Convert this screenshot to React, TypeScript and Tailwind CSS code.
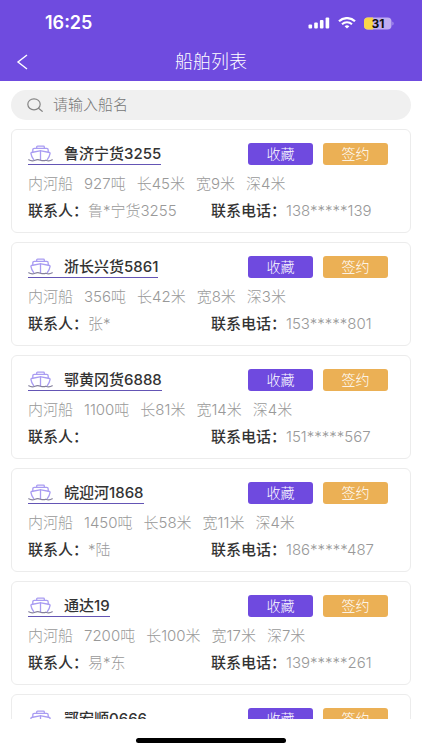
type Ship = {
  name: string;
  specs: string[];
  contact: string;
  phone: string;
};

const ships: Ship[] = [
  { name: "鲁济宁货3255", specs: ["内河船", "927吨", "长45米", "宽9米", "深4米"], contact: "鲁*宁货3255", phone: "138*****139" },
  { name: "浙长兴货5861", specs: ["内河船", "356吨", "长42米", "宽8米", "深3米"], contact: "张*", phone: "153*****801" },
  { name: "鄂黄冈货6888", specs: ["内河船", "1100吨", "长81米", "宽14米", "深4米"], contact: "", phone: "151*****567" },
  { name: "皖迎河1868", specs: ["内河船", "1450吨", "长58米", "宽11米", "深4米"], contact: "*陆", phone: "186*****487" },
  { name: "通达19", specs: ["内河船", "7200吨", "长100米", "宽17米", "深7米"], contact: "易*东", phone: "139*****261" },
  { name: "鄂宏顺0666", specs: [], contact: "", phone: "" },
];

function ShipIcon() {
  return (
    <svg width="25" height="20" viewBox="0 0 25 20" fill="none" aria-hidden="true">
      <g stroke="#a99cf2" strokeWidth="1.300" strokeLinejoin="round" strokeLinecap="round">
        <path d="M8.700 4.200V3q0-.8.800-.8h6q.8 0 .8.800v1.200" />
        <path d="M4.800 8.300V6q0-1.600 1.600-1.600h12.200q1.600 0 1.600 1.600v2.300" />
        <path d="M5.700 15.700C4.300 13.800 3.300 11.700 2.900 9.300q-.1-.6.500-.8l8.500-1.700q.6-.1 1.200 0l8.500 1.700q.6.200.5.800c-.4 2.400-1.400 4.500-2.800 6.400" />
        <path d="M12.500 7v8.800" />
      </g>
      <path
        d="M.7 15.800c2.200 1.300 4.500 1.300 6.400.4 1.700-.7 3.300-.7 5.400 0s3.700.7 5.400 0c1.900.9 4.200.9 6.400-.4"
        stroke="#85809c"
        strokeWidth="1.200"
        strokeLinecap="round"
      />
    </svg>
  );
}

function StatusBar() {
  return (
    <div className="flex h-[46px] items-center justify-between pl-[45px] pr-7">
      <span className="text-lg font-semibold leading-5">16:25</span>
      <div className="flex items-center gap-2">
        <svg width="22" height="12" viewBox="0 0 22 12" fill="#fff" aria-hidden="true">
          <rect x="0.500" y="7.500" width="3.600" height="4" rx="1" />
          <rect x="6.200" y="5.500" width="3.600" height="6" rx="1" />
          <rect x="11.900" y="3" width="3.600" height="8.500" rx="1" />
          <rect x="17.600" y="0.500" width="3.600" height="11" rx="1" />
        </svg>
        <svg width="18" height="12" viewBox="0 0 18 12" fill="none" aria-hidden="true">
          <path d="M1 4.300a11.500 11.500 0 0 1 16 0" stroke="#fff" strokeWidth="2.200" />
          <path d="M4 7.300a7.200 7.200 0 0 1 10 0" stroke="#fff" strokeWidth="2" />
          <path d="M9 11.600 6.600 9.300a3.500 3.500 0 0 1 4.800 0Z" fill="#fff" />
        </svg>
        <svg width="30" height="13" viewBox="0 0 30 13" aria-hidden="true">
          <path d="M4 .5h19.500a4 4 0 0 1 4 4v4a4 4 0 0 1-4 4H4a4 4 0 0 1-4-4v-4a4 4 0 0 1 4-4Z" fill="#c0adf2" />
          <path d="M4 .5h5v12H4a4 4 0 0 1-4-4v-4a4 4 0 0 1 4-4Z" fill="#f8d648" />
          <path d="M28.500 4.500c1.300.5 1.300 3.500 0 4Z" fill="#c0adf2" />
          <text x="14" y="11" textAnchor="middle" fontSize="12" fontWeight="700" fill="#111">
            31
          </text>
        </svg>
      </div>
    </div>
  );
}

function ShipCard({ ship }: { ship: Ship }) {
  return (
    <li className="rounded-md border border-[#ececec] bg-white px-4 pt-[13px] pb-[11px] text-[15px] leading-5">
      <div className="flex items-center justify-between pr-[6px]">
        <a href="#ship" className="flex h-[22px] items-end gap-[11px] border-b border-[#6455b5] font-medium text-[#333]">
          <ShipIcon />
          {ship.name}
        </a>
        <div className="flex gap-[10px] text-sm font-light text-white">
          <button type="button" className="h-[22px] w-[65px] rounded-[3px] bg-[#6f4adf]">收藏</button>
          <button type="button" className="h-[22px] w-[65px] rounded-[3px] bg-[#ebb055]">签约</button>
        </div>
      </div>
      <div className="mt-[9px] flex h-5 gap-[11px] font-light text-[#999]">
        {ship.specs.map((spec) => (
          <span key={spec}>{spec}</span>
        ))}
      </div>
      <dl className="mt-[7px] grid h-5 grid-cols-2 whitespace-nowrap font-light text-[#999]">
        <div className="flex">
          <dt className="font-medium text-[#333]">联系人：</dt>
          <dd>{ship.contact}</dd>
        </div>
        <div className="flex">
          <dt className="font-medium text-[#333]">联系电话：</dt>
          <dd>{ship.phone}</dd>
        </div>
      </dl>
    </li>
  );
}

export default function App() {
  return (
    <div className="flex h-screen flex-col bg-white font-[Inter,'Noto_Sans_CJK_SC',sans-serif]">
      <header className="bg-[#6f4bdf] text-white">
        <StatusBar />
        <div className="grid h-[35px] grid-cols-[1fr_auto_1fr] items-start px-4">
          <button type="button" aria-label="返回" className="flex h-8 w-4 items-center">
            <svg width="12" height="16" viewBox="0 0 12 16" fill="none" stroke="#fff" strokeWidth="1.400" aria-hidden="true">
              <path d="M11 1 2 8l9 7" />
            </svg>
          </button>
          <h1 className="text-lg font-light leading-8">船舶列表</h1>
        </div>
      </header>
      <label className="mx-[11px] my-[9px] flex h-[30px] shrink-0 items-center gap-[10px] rounded-full bg-[#f0f0f0] px-4">
        <svg width="16" height="14" viewBox="0 0 16 14" fill="none" stroke="#858585" strokeWidth="1.200" strokeLinecap="round" aria-hidden="true">
          <ellipse cx="7" cy="6.300" rx="6.200" ry="5.500" />
          <path d="m11.500 10.300 3.700 3" />
        </svg>
        <input
          type="search"
          aria-label="船名"
          placeholder="请输入船名"
          className="min-w-0 flex-1 bg-transparent text-[15px] font-light leading-5 outline-none placeholder:text-[#757575]"
        />
      </label>
      <ul className="flex min-h-0 flex-1 flex-col gap-[9px] overflow-y-auto px-[11px] [scrollbar-width:none]">
        {ships.map((ship) => (
          <ShipCard key={ship.name} ship={ship} />
        ))}
      </ul>
      <div className="flex h-[31px] shrink-0 items-end justify-center pb-[7px]">
        <div className="h-[5px] w-[150px] rounded-full bg-black" />
      </div>
    </div>
  );
}
